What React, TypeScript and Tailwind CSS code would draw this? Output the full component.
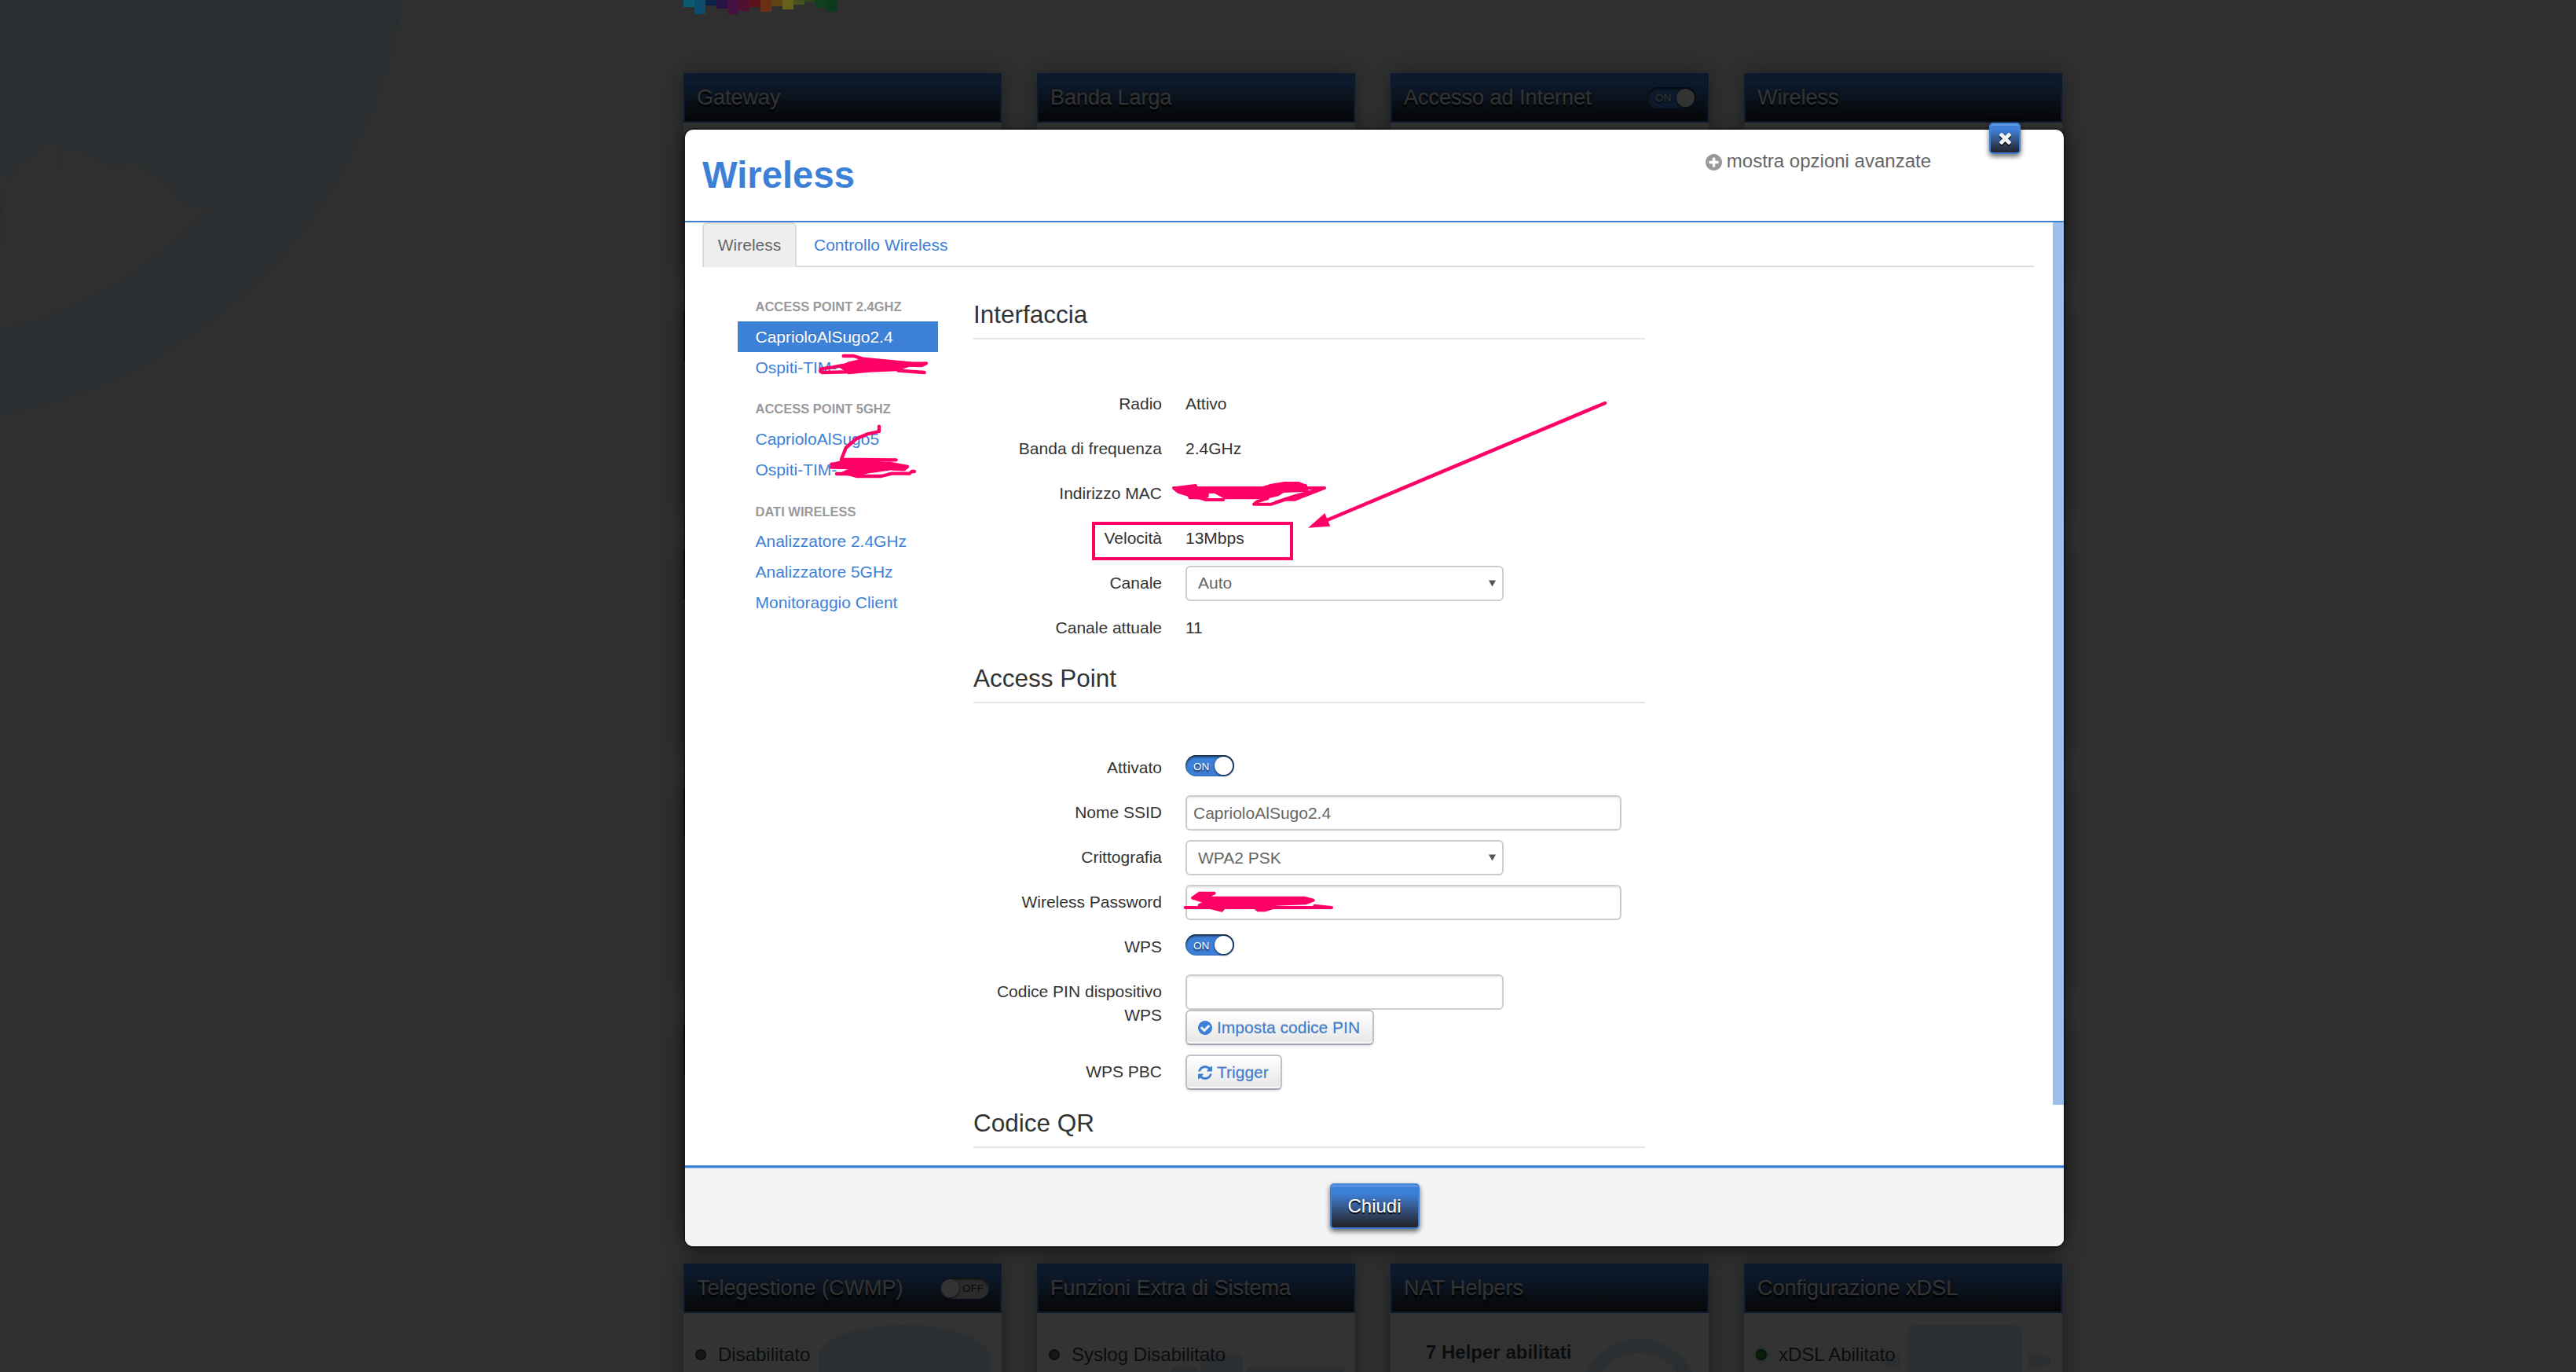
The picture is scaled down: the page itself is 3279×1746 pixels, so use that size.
import React from 'react';

const CIRCLE = 'M1536 896q0 209-103 385.5T1153.5 1561 768 1664t-385.5-103T103 1281.5 0 896t103-385.5T382.5 231 768 128t385.5 103T1433 510.5 1536 896z';

const ICONS = {
  plus: `M1216 960V832q0-26-19-45t-45-19H896V512q0-26-19-45t-45-19H704q-26 0-45 19t-19 45v256H384q-26 0-45 19t-19 45v128q0 26 19 45t45 19h256v256q0 26 19 45t45 19h128q26 0 45-19t19-45v-256h256q26 0 45-19t19-45z${CIRCLE}`,
  check: `M1284 734q0-28-18-46l-91-90q-19-19-45-19t-45 19L677 1005 451 779q-19-19-45-19t-45 19l-91 90q-18 18-18 46 0 27 18 45l362 362q19 19 45 19 27 0 46-19l543-543q18-18 18-45z${CIRCLE}`,
  refresh: 'M1511 1056q0 5-1 7-64 268-268 434.5T764 1664q-146 0-282.5-55T238 1452l-129 129q-19 19-45 19t-45-19-19-45v-448q0-26 19-45t45-19h448q26 0 45 19t19 45-19 45l-137 137q71 66 161 102t187 36q134 0 250-65t186-179q11-17 53-117 8-23 30-23h192q13 0 22.5 9.5t9.5 22.5zm25-800v448q0 26-19 45t-45 19h-448q-26 0-45-19t-19-45 19-45l138-138Q969 384 768 384q-134 0-250 65T332 628q-11 17-53 117-8 23-30 23H50q-13 0-22.5-9.5T18 736v-7q65-268 270-434.5T768 128q146 0 284 55.5T1297 340l130-129q19-19 45-19t45 19 19 45z',
};

const Icon: React.FC<{ name: keyof typeof ICONS; className: string }> = ({ name, className }) => (
  <svg viewBox="0 128 1536 1536" fill="currentColor" fillRule="evenodd" className={className}>
    <path d={ICONS[name]} />
  </svg>
);

const Toggle: React.FC<{ on?: boolean }> = ({ on = true }) =>
  on ? (
    <div className="flex h-[27px] w-[62px] items-center justify-between rounded-full bg-[#3d80d8] pl-[10px] pr-[2px] shadow-[inset_0_2px_3px_rgba(0,0,0,0.75),inset_-1px_0_2px_rgba(0,0,0,0.4)]">
      <span className="pt-px text-[13.5px] leading-none text-white [text-shadow:0_2px_2px_rgba(0,0,0,0.7)]">ON</span>
      <span className="h-[23px] w-[23px] rounded-full bg-white shadow-[0_1px_3px_rgba(0,0,0,0.8)]" />
    </div>
  ) : (
    <div className="flex h-[27px] w-[62px] items-center justify-between rounded-full bg-[#d6d6d6] pl-px pr-[7px] shadow-[inset_0_2px_3px_rgba(0,0,0,0.75)]">
      <span className="h-[23px] w-[23px] rounded-full bg-white shadow-[0_1px_3px_rgba(0,0,0,0.9)]" />
      <span className="text-[13.5px] leading-none text-[#333]">OFF</span>
    </div>
  );

interface CardProps {
  title?: string;
  toggle?: 'on' | 'off';
  children?: React.ReactNode;
}

const Card: React.FC<CardProps> = ({ title, toggle, children }) => (
  <div className="h-[258px] bg-white shadow-[0_0_26px_rgba(0,25,50,0.4)]">
    <div className="flex h-[63px] items-center justify-between border-2 border-[#3d80d8] bg-linear-to-b from-[#3d80d8] from-20% to-[#222228] pl-[15px] pr-[14px]">
      <h2 className="text-[27px] text-white [text-shadow:0_3px_1px_#000]">{title}</h2>
      {toggle && <Toggle on={toggle === 'on'} />}
    </div>
    <div className="relative">{children}</div>
  </div>
);

const CardArt: React.FC<{ children: React.ReactNode }> = ({ children }) => (
  <svg viewBox="0 0 405 195" className="absolute left-0 top-0 h-[195px] w-[405px]" fill="#dcebf4">
    {children}
  </svg>
);

const Status: React.FC<{ green?: boolean; children: React.ReactNode }> = ({ green, children }) => (
  <div className="relative flex items-center gap-[15px] pl-[15px] pt-[36px] text-[24px] leading-[33px] text-[#444]">
    <span
      className={
        green
          ? 'h-[14px] w-[14px] rounded-full border-2 border-[#1b6b1f] bg-[#2f9a35] shadow-[0_0_4px_#2f9a35]'
          : 'h-[14px] w-[14px] rounded-full border-2 border-[#444] bg-[#777]'
      }
    />
    {children}
  </div>
);

const LOGO_BARS = [
  ['#0c5a70', 9], ['#0b4c6e', 18], ['#0a2148', 7], ['#241344', 11], ['#441140', 18],
  ['#50102f', 14], ['#5e101b', 9], ['#6b3013', 15], ['#5f4514', 8], ['#66601b', 12],
  ['#46521b', 6], ['#26431b', 3], ['#0f4020', 10], ['#0b3a1c', 15],
] as const;

const Dashboard: React.FC = () => (
  <div className="relative h-full bg-[#ebebeb]">
    {/* watermark in the top left corner */}
    <svg className="absolute left-0 top-0 h-[540px] w-[520px]" viewBox="0 0 520 540">
      <circle cx="-119.5" cy="-100.6" r="640.5" fill="#d2e6f0" />
      <path
        fill="#ebebeb"
        d="M0 222Q8 224 16 229Q19 215 25 208Q32 203 42 198Q48 189 55 186Q62 183 68 184Q74 184 76 188Q78 190 76.600 196Q73 206 72 217H74.400Q75 208 78 203Q79 194 83 191Q88 187 92 188Q97 188 100 191L111 198Q118 200 125 204L145 216Q151 210 158 209Q165 206 172 207.600Q177 207 180 211L191 221Q203 227 214 235Q221 240 222 244Q226 249 225 254Q233 256 244 262Q252 264 261 264.500Q265 265 264 267A533 533 0 0 1 0 420V317Q10 295 6 280Q3 260 0 238Z"
      />
    </svg>
    <div className="relative mx-auto w-[1755px] translate-x-[108px] pt-[93px]">
      <div className="grid grid-cols-4 gap-[45px]">
        <Card title="Gateway" />
        <Card title="Banda Larga" />
        <Card title="Accesso ad Internet" toggle="on" />
        <Card title="Wireless" />
        {Array.from({ length: 16 }, (_, i) => (
          <Card key={i} />
        ))}
        <Card title="Telegestione (CWMP)" toggle="off">
          <CardArt>
            <path d="M172 195V55A109 40 0 0 1 390 55V195Z" />
          </CardArt>
          <Status>Disabilitato</Status>
        </Card>
        <Card title="Funzioni Extra di Sistema">
          <CardArt>
            <path d="M171 72Q171 69 174 69H201Q204 69 204 72V195H171ZM208 60Q208 52 216 52H254Q262 52 262 60V195H208ZM267 69H388Q391 69 391 72V195H267Z" />
          </CardArt>
          <Status>Syslog Disabilitato</Status>
        </Card>
        <Card title="NAT Helpers">
          <CardArt>
            <circle cx="317" cy="108" r="66" fill="none" stroke="#dcebf4" strokeWidth="18" />
          </CardArt>
          <p className="relative pl-[45px] pt-[33px] text-[24px] font-bold leading-[33px] text-[#444]">7 Helper abilitati</p>
        </Card>
        <Card title="Configurazione xDSL">
          <CardArt>
            <path d="M208 27Q208 15 220 15H342Q354 15 354 27V195H208ZM180 52H199V70H180V66H173V56H180ZM362 52H381V56H386Q391 56 391 61V66H382V70H362Z" />
          </CardArt>
          <Status green>xDSL Abilitato</Status>
        </Card>
      </div>
    </div>
  </div>
);

const SIDEBAR = [
  { heading: 'ACCESS POINT 2.4GHZ', items: ['CaprioloAlSugo2.4', 'Ospiti-TIM-'] },
  { heading: 'ACCESS POINT 5GHZ', items: ['CaprioloAlSugo5', 'Ospiti-TIM-'] },
  { heading: 'DATI WIRELESS', items: ['Analizzatore 2.4GHz', 'Analizzatore 5GHz', 'Monitoraggio Client'] },
];

const Sidebar: React.FC = () => (
  <nav className="w-[255px]">
    {SIDEBAR.map(({ heading, items }, g) => (
      <div key={heading} className="mb-[13.5px]">
        <h4 className="h-[38.75px] pl-[22.5px] text-[16.5px] font-bold leading-[40px] text-[#999]">{heading}</h4>
        {items.map((item, i) => (
          <a
            key={item}
            className={
              g === 0 && i === 0
                ? 'block bg-[#3d80d8] pl-[22.5px] leading-[39px] text-white [text-shadow:0_-1px_0_rgba(0,0,0,0.2)]'
                : 'block pl-[22.5px] leading-[39px] text-[#3d80d8]'
            }
          >
            {item}
          </a>
        ))}
      </div>
    ))}
  </nav>
);

const Section: React.FC<{ title: string; children?: React.ReactNode }> = ({ title, children }) => (
  <section>
    <h3 className="h-[62px] border-b-2 border-[#e5e5e5] text-[31.5px] leading-[60px]">{title}</h3>
    {children && <div className="flex flex-col gap-3 pb-[11.4px] pt-[60px]">{children}</div>}
  </section>
);

const Row: React.FC<{ label: string; children?: React.ReactNode }> = ({ label, children }) => (
  <div className="flex min-h-[45px] items-start gap-[30px]">
    <label className="w-[240px] pt-[7px] text-right leading-[30px]">{label}</label>
    {children}
  </div>
);

const Value: React.FC<{ children?: React.ReactNode }> = ({ children }) => (
  <span className="pt-[7px] leading-[30px]">{children}</span>
);

const Select: React.FC<{ value: string }> = ({ value }) => (
  <div className="flex h-[45px] w-[405px] items-center justify-between rounded-[6px] border-2 border-[#ccc] bg-white pl-[14px] pr-[8px] text-[#666]">
    <span className="-mt-px">{value}</span>
    <svg viewBox="0 0 10 9" className="h-[9px] w-[9px]" fill="#555">
      <path d="M0 0H10L5 9Z" />
    </svg>
  </div>
);

const Input: React.FC<{ value?: string; narrow?: boolean }> = ({ value, narrow }) => (
  <div
    className={`flex h-[45px] items-center rounded-[6px] border-2 border-[#ccc] bg-white pl-[8px] text-[#666] shadow-[inset_0_2px_2px_rgba(0,0,0,0.075)] ${
      narrow ? 'w-[405px]' : 'w-[555px]'
    }`}
  >
    {value}
  </div>
);

const Button: React.FC<{ icon: keyof typeof ICONS; children: React.ReactNode }> = ({ icon, children }) => (
  <button className="flex h-[45px] w-fit items-center gap-[6px] rounded-[6px] border-2 border-[#c5bdc9] border-b-[#a89fb0] bg-linear-to-b from-white to-[#e6e6e6] pl-[14px] pr-[15.5px] text-[#3d80d8] shadow-[inset_0_-2px_0_rgba(255,255,255,0.8),0_2px_3px_rgba(0,0,0,0.1)] [text-shadow:0_-1px_0_rgba(90,80,90,0.4)]">
    <Icon name={icon} className="h-[18px] w-[18px]" />
    {children}
  </button>
);

const PRIMARY =
  'flex items-center justify-center rounded-[5px] border-2 border-[#3d80d8] bg-linear-to-b from-[#3d80d8] from-20% to-[#222228] text-white shadow-[inset_0_2px_0_rgba(255,255,255,0.2),0_3px_6px_rgba(0,0,0,0.6)]';

const Modal: React.FC = () => (
  <div className="absolute left-[872px] top-[165px] flex h-[1421px] w-[1755px] flex-col rounded-[10px] bg-white text-[21px] text-[#333] shadow-[0_0_0_2px_rgba(0,0,0,0.3),0_5px_22px_rgba(0,0,0,0.5)]">
    <header className="flex h-[118px] items-start justify-between border-b-2 border-[#3d80d8] pl-[22px] pr-[169px]">
      <h1 className="pt-[28px] text-[47.25px] font-bold leading-[60px] text-[#3d80d8]">Wireless</h1>
      <span className="flex items-center gap-[6px] pt-[25px] text-[24px] leading-[30px] text-[#666]">
        <Icon name="plus" className="mt-[3px] h-[21px] w-[21px] text-[#999]" />
        mostra opzioni avanzate
      </span>
    </header>
    <button className={`${PRIMARY} absolute left-[1660px] top-[-9px] h-[40px] w-[40px]`}>
      <svg viewBox="110 366 1188 1188" className="h-[15px] w-[15px] drop-shadow-[0_2px_0_#111]" fill="#f2f2f2">
        <path d="M1298 1322q0 40-28 68l-136 136q-28 28-68 28t-68-28L704 1232l-294 294q-28 28-68 28t-68-28l-136-136q-28-28-28-68t28-68l294-294L138 666q-28-28-28-68t28-68l136-136q28-28 68-28t68 28l294 294 294-294q28-28 68-28t68 28l136 136q28 28 28 68t-28 68L976 960l294 294q28 28 28 68z" />
      </svg>
    </button>

    <div className="flex h-[1200px] items-start justify-between overflow-hidden pl-[22px]">
      <div className="w-[1695px]">
        <div className="flex h-[57px] border-b-2 border-[#ddd] leading-[57px]">
          <span className="h-[57px] w-[120px] rounded-t-[6px] border-x-2 border-t-2 border-[#ddd] bg-[#eee] text-center leading-[54px] text-[#666]">
            Wireless
          </span>
          <span className="pl-[22px] leading-[57px] text-[#3d80d8]">Controllo Wireless</span>
        </div>
        <div className="flex gap-[45px] pl-[45px] pt-[30px]">
          <Sidebar />
          <main className="w-[855px]">
            <Section title="Interfaccia">
              <Row label="Radio"><Value>Attivo</Value></Row>
              <Row label="Banda di frequenza"><Value>2.4GHz</Value></Row>
              <Row label="Indirizzo MAC" />
              <Row label="Velocità"><Value>13Mbps</Value></Row>
              <Row label="Canale"><Select value="Auto" /></Row>
              <Row label="Canale attuale"><Value>11</Value></Row>
            </Section>
            <Section title="Access Point">
              <Row label="Attivato"><div className="pt-[6px]"><Toggle /></div></Row>
              <Row label="Nome SSID"><Input value="CaprioloAlSugo2.4" /></Row>
              <Row label="Crittografia"><Select value="WPA2 PSK" /></Row>
              <Row label="Wireless Password"><Input /></Row>
              <Row label="WPS"><div className="pt-[6px]"><Toggle /></div></Row>
              <Row label="Codice PIN dispositivo WPS">
                <div>
                  <Input narrow />
                  <Button icon="check">Imposta codice PIN</Button>
                </div>
              </Row>
              <Row label="WPS PBC"><Button icon="refresh">Trigger</Button></Row>
            </Section>
            <Section title="Codice QR" />
          </main>
        </div>
      </div>
      <div className="h-[1123px] w-[14px] bg-[#9dbfec]" />
    </div>

    <footer className="flex h-[103px] items-start justify-center rounded-b-[10px] border-t-[3px] border-[#3d80d8] bg-[#f4f4f4] pt-[20px] shadow-[inset_0_1px_0_#a9c8e4]">
      <button className={`${PRIMARY} h-[58px] w-[114px] text-[24px] [text-shadow:0_2px_1px_#000]`}>Chiudi</button>
    </footer>
  </div>
);

const Annotations: React.FC = () => (
  <svg
    viewBox="0 0 3279 1746"
    className="pointer-events-none absolute left-0 top-0 h-[1746px] w-[3279px]"
    stroke="#ff0066"
    strokeWidth="4"
    strokeLinejoin="round"
    strokeLinecap="round"
    fill="none"
  >
    <rect x="1392" y="666" width="252" height="45" strokeLinejoin="miter" />
    <path d="M2043 513L1689 662" strokeWidth="4.5" />
    <path d="M1665 671.700L1686.300 653L1693.300 669.700Z" fill="#ff0066" stroke="none" />
    <g transform="translate(860 350) scale(0.33333)" strokeWidth="13">
      <path d="M641 309H680L715 320L900 338L940 338L957 337L940 345L860 343M700 318L760 330L860 336M640 345L600 352L555 358L553 366L560 372L650 370M850 365L950 372" />
      <path fill="#ff0066" d="M632 350L660 338L720 324L800 330L900 338L880 348L845 360L740 365L660 372L655 365Z" />
      <path d="M777 578V597L730 608L690 625L650 660L633 704L842 706M595 722L700 718L820 720L885 732L872 742L830 740M595 734L700 736M615 759H660L690 768H785L825 758H893L902 750H912" />
      <path fill="#ff0066" d="M598 724L640 712L720 714L820 722L870 732L825 738L740 750L690 762L640 757L680 738Z" />
    </g>
    <g transform="translate(1380 590) scale(0.33333)" strokeWidth="12">
      <path d="M342 93L360 108L390 110L420 124L404 128L440 130L465 138H532M342 93H918L805 137H770L715 155H648L660 145L700 133M918 93L800 125L730 148M845 84L850 105L835 122" />
      <path fill="#ff0066" d="M345 94L425 84L430 93H560L685 93L715 83L765 75H820L846 86L840 102L760 105L740 118L690 130H540L500 108H470L470 125L448 130H404L400 120L362 108Z" />
      <path fill="#ff0066" d="M500 104L700 102V128H540L520 114Z" />
    </g>
    <g transform="translate(1480 1110) scale(0.33333)" strokeWidth="12">
      <path d="M86 135H645L580 128M115 98L140 80H197L160 96" />
      <path fill="#ff0066" d="M115 98L145 86L190 98H540L575 107L545 118L430 122L425 134L390 145H365L350 134H275L240 128L225 146L195 138L140 126L165 114Z" />
    </g>
  </svg>
);

const Logo: React.FC = () => (
  <div className="absolute left-[870px] top-0 flex items-start">
    {LOGO_BARS.map(([color, height]) => (
      <span key={color} className="w-[14px]" style={{ backgroundColor: color, height }} />
    ))}
  </div>
);

export default function App() {
  return (
    <div className="relative h-[1746px] w-[3279px] overflow-hidden font-['Liberation_Sans',Arial,sans-serif]">
      <Dashboard />
      <div className="absolute inset-0 bg-black/80" />
      <Logo />
      <Modal />
      <Annotations />
    </div>
  );
}
